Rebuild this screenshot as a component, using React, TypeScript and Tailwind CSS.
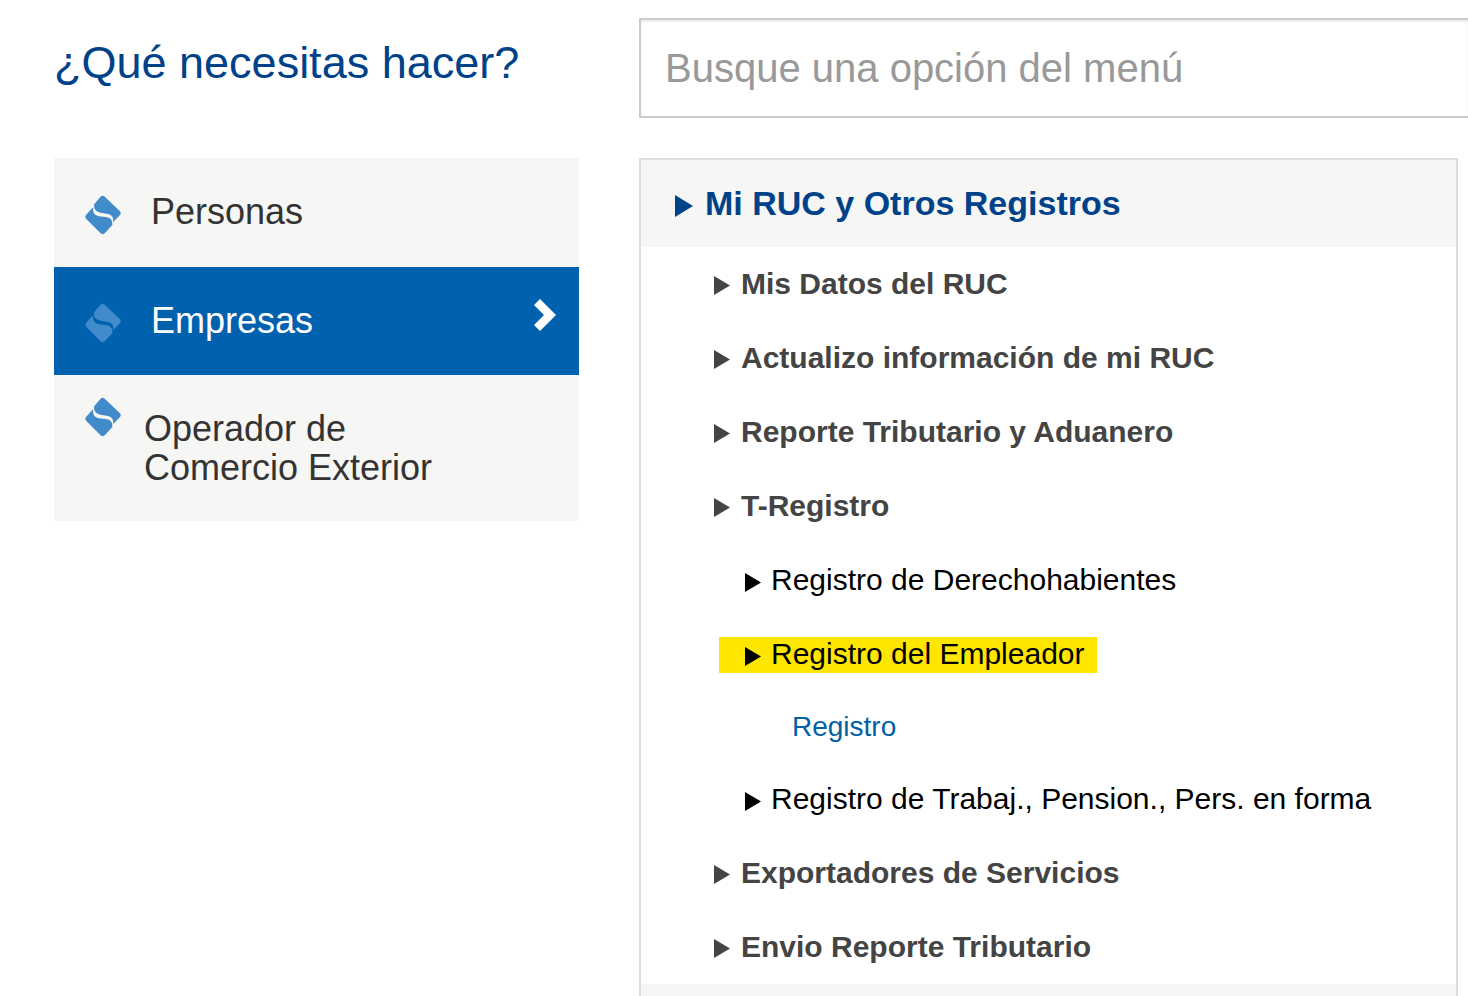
import React from "react";

function SunatLogo() {
  return (
    <svg viewBox="8 7 108 120" aria-hidden="true" className="h-10 w-9 shrink-0 fill-[#428bca]">
      <path d="M37 48 Q34 41 36 34 L54 13 Q61 6 68 13 L112 55 Q118 61 113 67 L92 89 Q95 73 85 67 Q79 63 64 61.500 Q42 59 37 48 Z" />
      <path d="M33 43 L11 67 Q6 73 12 79 L54 121 Q61 128 68 121 L90 97 Q91 83 84 78 Q79 74 64 72.500 Q44 71 37 65 Q30 58 33 43 Z" />
    </svg>
  );
}

function Caret({ large = false }: { large?: boolean }) {
  return (
    <svg
      viewBox="0 0 17 20"
      preserveAspectRatio="none"
      aria-hidden="true"
      className={large ? "mt-1 h-[22px] w-[18px] shrink-0 fill-current" : "mt-0.5 h-[19px] w-4 shrink-0 fill-current"}
    >
      <path d="M0 0 L17 10 L0 20 Z" />
    </svg>
  );
}

function Section({ label }: { label: string }) {
  return (
    <li>
      <button type="button" className="flex h-[74px] w-full items-center gap-[11px] pl-[73px] text-left text-[30px] font-bold text-[#444444]">
        <Caret />
        <span className="pb-0.5">{label}</span>
      </button>
    </li>
  );
}

function SubSection({ label, highlighted = false }: { label: string; highlighted?: boolean }) {
  return (
    <li className="flex h-[74px] items-center pt-0.5 pl-[78px]">
      <button
        type="button"
        className={
          highlighted
            ? "flex h-9 items-center gap-2.5 bg-[#ffe600] pr-3 pl-[26px] text-[30px] leading-8 whitespace-nowrap text-black"
            : "flex h-9 items-center gap-2.5 pr-3 pl-[26px] text-[30px] leading-8 whitespace-nowrap text-black"
        }
      >
        <Caret />
        <span className="pb-0.5">{label}</span>
      </button>
    </li>
  );
}

export default function App() {
  return (
    <div className="flex h-screen flex-col overflow-hidden bg-white pl-[54px] font-['Liberation_Sans',Arial,sans-serif]">
      <header className="flex shrink-0 gap-[60px] pt-[18px]">
        <h1 className="w-[525px] shrink-0 pt-5 text-[45px] leading-[50px] whitespace-nowrap text-[#004289]">
          ¿Qué necesitas hacer?
        </h1>
        <input
          type="search"
          aria-label="Busque una opción del menú"
          placeholder="Busque una opción del menú"
          className="h-[100px] min-w-0 flex-1 border-2 border-r-0 border-[#cccccc] bg-white px-6 text-[40px] text-[#444444] shadow-[inset_0_2px_2px_rgba(0,0,0,0.08)] placeholder:text-[#999999] placeholder:opacity-100"
        />
      </header>

      <div className="flex min-h-0 flex-1 items-stretch gap-[60px] pt-10 pr-2.5">
        <nav aria-label="Perfiles" className="w-[525px] shrink-0 text-[36px] leading-[39px] text-[#333333]">
          <button type="button" className="flex h-[109px] w-full items-center gap-[30px] bg-[#f6f6f4] pt-1 pl-[31px] text-left">
            <SunatLogo />
            <span className="pb-1.5">Personas</span>
          </button>
          <button type="button" className="flex h-[108px] w-full items-center gap-[30px] bg-[#0061af] pt-1 pr-[23px] pl-[31px] text-left text-white">
            <SunatLogo />
            <span className="pb-1.5">Empresas</span>
            <svg viewBox="0 0 22 32" aria-hidden="true" className="mb-4 ml-auto h-8 w-[22px] fill-white">
              <path d="M6 0 L22 16 L6 32 L0 26 L10 16 L0 6 Z" />
            </svg>
          </button>
          <button type="button" className="flex h-[146px] w-full items-start gap-[23px] bg-[#f6f6f4] pt-[22px] pl-[31px] text-left">
            <SunatLogo />
            <span className="pt-3">
              Operador de
              <br />
              Comercio Exterior
            </span>
          </button>
        </nav>

        <main className="min-w-0 flex-1 overflow-hidden border-2 border-b-0 border-[#dddddd]">
          <h2 className="bg-[#f6f6f4]">
            <button type="button" className="flex h-[87px] w-full items-center gap-3 pl-[34px] text-left text-[34px] font-bold text-[#004289]">
              <Caret large />
              <span>Mi RUC y Otros Registros</span>
            </button>
          </h2>
          <ul>
            <Section label="Mis Datos del RUC" />
            <Section label="Actualizo información de mi RUC" />
            <Section label="Reporte Tributario y Aduanero" />
            <Section label="T-Registro" />
            <SubSection label="Registro de Derechohabientes" />
            <SubSection label="Registro del Empleador" highlighted />
            <li className="flex h-[71px] items-center pl-[151px]">
              <a href="#registro" className="text-[28px] text-[#0061a5]">
                Registro
              </a>
            </li>
            <SubSection label="Registro de Trabaj., Pension., Pers. en forma" />
            <Section label="Exportadores de Servicios" />
            <Section label="Envio Reporte Tributario" />
          </ul>
          <div className="h-[87px] bg-[#f6f6f4]" />
        </main>
      </div>
    </div>
  );
}
